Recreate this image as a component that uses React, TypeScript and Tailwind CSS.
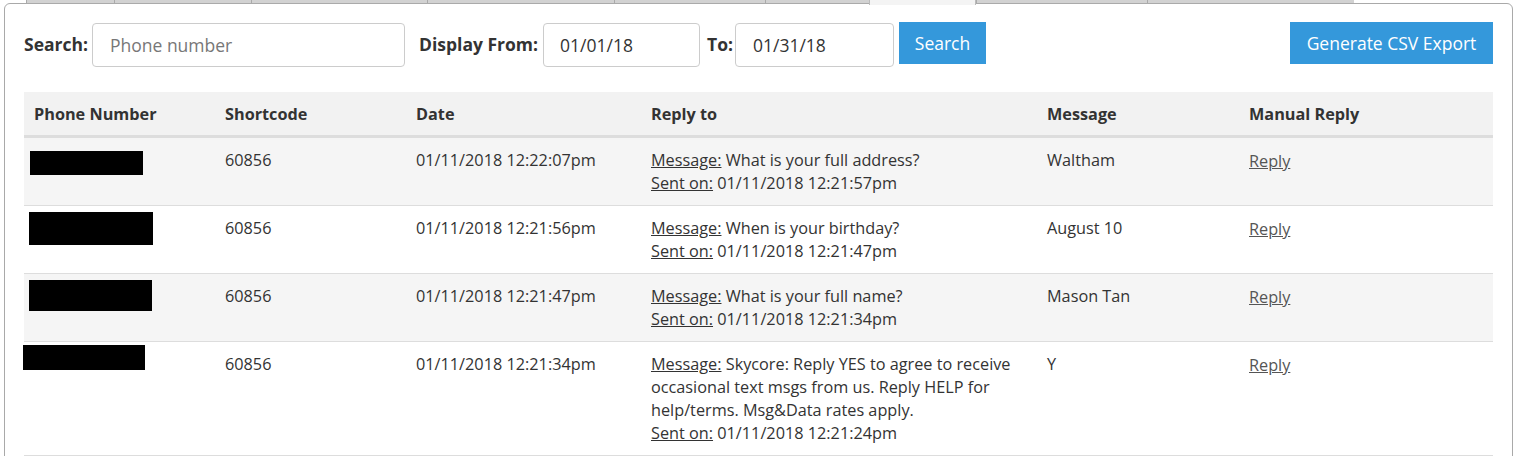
import React from "react";

const TABS = [
  { w: 88 },
  { w: 137 },
  { w: 176 },
  { w: 187 },
  { w: 151 },
  { w: 104 },
  { w: 107, active: true },
  { w: 171 },
  { w: 207 },
];

const ROWS = [
  {
    box: "ml-[6px] mt-[3px] h-[24px] w-[113px]",
    date: "01/11/2018 12:22:07pm",
    msg: "What is your full address?",
    sent: "01/11/2018 12:21:57pm",
    reply: "Waltham",
    shade: true,
  },
  {
    box: "ml-[5px] mt-[-4px] h-[33px] w-[124px]",
    date: "01/11/2018 12:21:56pm",
    msg: "When is your birthday?",
    sent: "01/11/2018 12:21:47pm",
    reply: "August 10",
  },
  {
    box: "ml-[5px] mt-[-4px] h-[31px] w-[123px]",
    date: "01/11/2018 12:21:47pm",
    msg: "What is your full name?",
    sent: "01/11/2018 12:21:34pm",
    reply: "Mason Tan",
    shade: true,
  },
  {
    box: "ml-[-1px] mt-[-7px] h-[25px] w-[122px]",
    date: "01/11/2018 12:21:34pm",
    msg: "Skycore: Reply YES to agree to receive occasional text msgs from us. Reply HELP for help/terms. Msg&Data rates apply.",
    sent: "01/11/2018 12:21:24pm",
    reply: "Y",
  },
];

export default function App() {
  return (
    <div className="h-[456px] w-[1524px] overflow-hidden bg-white font-['Open_Sans',sans-serif] text-[16.25px] leading-[23px] text-[#333]">
      <div className="flex h-[4px] pl-[26px]">
        {TABS.map((t, i) => (
          <div
            key={i}
            style={{ width: t.w }}
            className={
              t.active
                ? "relative z-10 h-[5px] border-x border-[#bbb] bg-[#f4f4f4]"
                : "border-l border-b border-[#aaa] bg-[#d2d2d2]"
            }
          />
        ))}
      </div>
      <div className="-mt-[1px] ml-[4px] h-[470px] w-[1509px] rounded-t-[6px] border border-[#a9a9a9] px-[19px] pt-[18px]">
        <div className="flex items-center text-[17.5px]">
          <label className="font-bold">Search:</label>
          <input
            className="ml-[4px] h-[44px] w-[313px] shrink-0 rounded-[4px] border border-[#ccc] px-[17px] outline-none placeholder:text-[#777]"
            placeholder="Phone number"
          />
          <label className="ml-[14px] font-bold">Display From:</label>
          <input
            className="ml-[5px] h-[44px] w-[157px] shrink-0 rounded-[4px] border border-[#ccc] px-[16px] outline-none"
            defaultValue="01/01/18"
          />
          <label className="ml-[7px] font-bold">To:</label>
          <input
            className="ml-[2px] h-[44px] w-[159px] shrink-0 rounded-[4px] border border-[#ccc] px-[17px] outline-none"
            defaultValue="01/31/18"
          />
          <button className="mb-[3px] ml-[5px] h-[42px] w-[87px] shrink-0 bg-[#3498db] text-white">Search</button>
          <button className="mb-[3px] ml-auto h-[42px] w-[203px] shrink-0 bg-[#3498db] text-white">
            Generate CSV Export
          </button>
        </div>

        <table className="mt-[25px] w-[1469px] table-fixed border-collapse">
          <colgroup>
            <col className="w-[191px]" />
            <col className="w-[191px]" />
            <col className="w-[235px]" />
            <col className="w-[396px]" />
            <col className="w-[202px]" />
            <col />
          </colgroup>
          <thead>
            <tr className="h-[44px] border-b-[3px] border-[#ddd] bg-[#f2f2f2] text-left">
              {["Phone Number", "Shortcode", "Date", "Reply to", "Message", "Manual Reply"].map((h) => (
                <th key={h} className="px-[10px] pt-[2px] align-middle font-bold">
                  {h}
                </th>
              ))}
            </tr>
          </thead>
          <tbody>
            {ROWS.map((r, i) => (
              <tr key={i} className={`border-b border-[#ddd] align-top ${r.shade ? "bg-[#f5f5f5]" : "bg-white"}`}>
                <td className="pt-[10px] pb-[10px]">
                  <div className={`bg-black ${r.box}`} />
                </td>
                <td className="px-[10px] pt-[11px] pb-[10px]">60856</td>
                <td className="px-[10px] pt-[11px] pb-[10px]">{r.date}</td>
                <td className="px-[10px] pt-[11px] pb-[10px]">
                  <span className="underline">Message:</span> {r.msg}
                  <br />
                  <span className="underline">Sent on:</span> {r.sent}
                </td>
                <td className="px-[10px] pt-[11px] pb-[10px]">{r.reply}</td>
                <td className="px-[10px] pt-[12px] pb-[10px]">
                  <a className="text-[#555] underline" href="#">
                    Reply
                  </a>
                </td>
              </tr>
            ))}
          </tbody>
        </table>
      </div>
    </div>
  );
}
